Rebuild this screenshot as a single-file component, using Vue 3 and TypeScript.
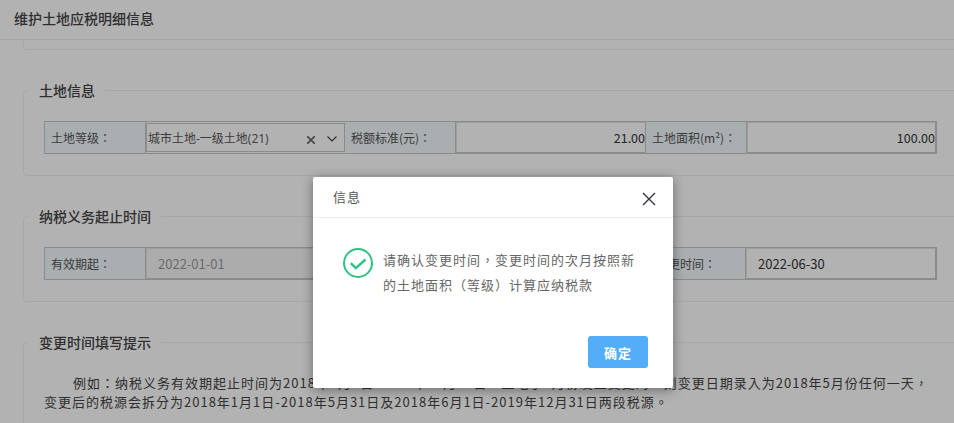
<script setup lang="ts">
interface Cell { label: string; value: string; width: number; labelWidth: number }
const landCells: Cell[] = [
  { label: '税额标准(元)：', value: '21.00', labelWidth: 111, width: 190 },
  { label: '土地面积(m²)：', value: '100.00', labelWidth: 101, width: 189 },
]
</script>

<template>
  <div class="page">
    <header class="head">维护土地应税明细信息</header>
    <div class="body">
      <div class="stub"></div>

      <fieldset class="group">
        <legend>土地信息</legend>
        <div class="row">
          <div class="label" style="width: 101px">土地等级：</div>
          <div class="select">
            <span class="select-text">城市土地-一级土地(21)</span>
            <svg class="clear" width="8" height="8" viewBox="0 0 8 8"><path d="M0 0l8 8M8 0l-8 8" /></svg>
            <svg class="arrow" width="10" height="6" viewBox="0 0 10 6"><path d="M.5.5L5 5 9.500.5" /></svg>
          </div>
          <template v-for="c in landCells" :key="c.label">
            <div class="label" :style="{ width: c.labelWidth + 'px' }">{{ c.label }}</div>
            <div class="value num" :style="{ width: c.width + 'px' }">{{ c.value }}</div>
          </template>
        </div>
      </fieldset>

      <fieldset class="group">
        <legend>纳税义务起止时间</legend>
        <div class="row">
          <div class="label" style="width: 101px">有效期起：</div>
          <div class="value date disabled" style="width: 499px">2022-01-01</div>
          <div class="label wide-pad" style="width: 101px">变更时间：</div>
          <div class="value date" style="width: 190px">2022-06-30</div>
        </div>
      </fieldset>

      <fieldset class="group">
        <legend>变更时间填写提示</legend>
        <p class="tip">例如：纳税义务有效期起止时间为2018年1月1日-2019年12月31日，土地于5月份发生变更的，则变更日期录入为2018年5月份任何一天，变更后的税源会拆分为2018年1月1日-2018年5月31日及2018年6月1日-2019年12月31日两段税源。</p>
      </fieldset>
    </div>

    <div class="shade"></div>

    <section class="dialog">
      <div class="dialog-head">
        <span class="dialog-title">信息</span>
        <svg class="close" width="14" height="14" viewBox="0 0 14 14"><path d="M1 1l12 12M13 1L1 13" /></svg>
      </div>
      <div class="dialog-body">
        <svg class="ok" width="30" height="30" viewBox="0 0 30 30">
          <circle cx="15" cy="15" r="14" />
          <path d="M7.800 15.200l5 5 9.700-8.700" />
        </svg>
        <p>请确认变更时间，变更时间的次月按照新的土地面积（等级）计算应纳税款</p>
      </div>
      <div class="dialog-foot">
        <button type="button">确定</button>
      </div>
    </section>
  </div>
</template>

<style>
html, body { margin: 0; overflow: hidden; background: #fff; }
</style>

<style scoped>
.page {
  position: relative;
  width: 954px;
  height: 423px;
  overflow: hidden;
  background: #fff;
  color: #333;
  font-family: "Noto Sans CJK TC", "Open Sans", sans-serif;
  font-size: 12px;
}
.head {
  box-sizing: border-box;
  height: 40px;
  padding: 0 14px;
  border-bottom: 1px solid #f0f0f0;
  font-size: 14px;
  font-weight: 500;
  line-height: 36px;
  color: #444;
}
.body {
  width: 935px;
  margin-left: 23px;
}
.stub {
  box-sizing: border-box;
  height: 10px;
  border: 1px solid #f0f0f0;
  border-top: 0;
  border-radius: 0 0 4px 4px;
}
.group {
  box-sizing: border-box;
  margin: 30px 0 0;
  padding: 21px 20px 21px;
  min-width: 0;
  border: 1px solid #f0f0f0;
  border-radius: 4px;
}
.group legend {
  margin-left: -15px;
  padding: 0 10px;
  height: 20px;
  font-size: 14px;
  font-weight: 500;
  line-height: 20px;
  color: #444;
}
.row {
  display: flex;
  height: 33px;
  box-sizing: border-box;
  border: 1px solid #c8c8c8;
}
.label {
  box-sizing: border-box;
  flex: none;
  padding-left: 6px;
  background: #f3f9fc;
  border-right: 1px solid #c8c8c8;
  line-height: 31px;
  color: #555;
}
.wide-pad { padding-left: 11px; }
.select {
  box-sizing: border-box;
  flex: none;
  display: flex;
  align-items: center;
  width: 199px;
  height: 29px;
  margin-top: 1px;
  padding: 0 7px 0 1px;
  border: 1px solid #c8c8c8;
  background: #fff;
}
.select-text {
  flex: 1;
  color: #555;
  font-family: "Open Sans", "Noto Sans CJK TC", sans-serif;
}
.clear { margin: 5px 12px 0 0; }
.clear path { fill: none; stroke: #666; stroke-width: 1.6; }
.arrow { margin-top: 2px; }
.arrow path { fill: none; stroke: #444; stroke-width: 1.2; }
.value {
  box-sizing: border-box;
  flex: none;
  border: 1px solid #e2e2e2;
  border-right-color: #c8c8c8;
  border-bottom-color: #c8c8c8;
  line-height: 30px;
  color: #333;
}
.num { text-align: right; font-size: 12.5px; line-height: 29px; }
.date { padding-left: 11px; font-size: 13px; }
.disabled { color: #999; background: #f7f7f7; }
.tip {
  margin: 0;
  font-size: 13px;
  line-height: 19px;
  letter-spacing: 1px;
  text-indent: 29px;
  color: #444;
}
.shade {
  position: absolute;
  inset: 0;
  background: rgba(0, 0, 0, 0.3);
}
.dialog {
  position: absolute;
  left: 313px;
  top: 177px;
  width: 360px;
  height: 211px;
  display: flex;
  flex-direction: column;
  background: #fff;
  border-radius: 2px;
  box-shadow: 0 2px 12px rgba(0, 0, 0, 0.4);
}
.dialog-head {
  box-sizing: border-box;
  flex: none;
  display: flex;
  align-items: center;
  justify-content: space-between;
  height: 41px;
  padding: 0 17px 0 20px;
  border-bottom: 1px solid #eee;
  font-size: 13px;
  color: #555;
}
.dialog-title { margin-bottom: 2px; letter-spacing: 1px; }
.close { margin-top: 3px; }
.close path { fill: none; stroke: #33333c; stroke-width: 1.4; }
.dialog-body {
  flex: 1;
  display: flex;
  align-items: flex-start;
  gap: 10px;
  padding: 29px 30px 0;
}
.ok { flex: none; margin-top: 1px; }
.ok circle { fill: none; stroke: #2fc383; stroke-width: 2; }
.ok path { fill: none; stroke: #2fc383; stroke-width: 2.4; }
.dialog-body p {
  margin: 0;
  font-size: 13px;
  line-height: 25px;
  color: #666;
  letter-spacing: 1px;
}
.dialog-foot {
  flex: none;
  display: flex;
  justify-content: flex-end;
  padding: 0 25px 20px;
}
.dialog-foot button {
  width: 60px;
  height: 32px;
  padding: 0;
  border: 0;
  border-radius: 3px;
  background: #53adf7;
  color: #fff;
  letter-spacing: 1px;
  font-family: "Noto Sans CJK SC", sans-serif;
  font-size: 13px;
  font-weight: 700;
}
</style>
